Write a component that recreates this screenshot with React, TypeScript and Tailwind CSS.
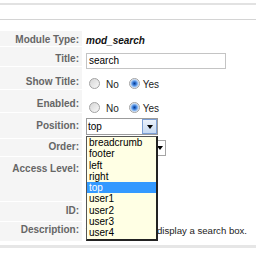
import React from 'react';

const positions = ['breadcrumb', 'footer', 'left', 'right', 'top', 'user1', 'user2', 'user3', 'user4'];

function Radio({ checked }: { checked?: boolean }) {
  return (
    <span
      className={`inline-block h-[11px] w-[11px] shrink-0 rounded-full border border-[#a2a2a2] ${
        checked
          ? 'bg-[radial-gradient(circle,#0b3a87_0,#2b6fd0_1.5px,#7fb0ee_3px,#e8eef6_4.5px,#f4f4f4_6px)]'
          : 'bg-[linear-gradient(135deg,#d6d6d6,#f8f8f8)]'
      }`}
    />
  );
}

function YesNo({ mt }: { mt: string }) {
  return (
    <div className={`flex items-center ${mt}`}>
      <div className="ml-[3px]">
        <Radio />
      </div>
      <span className="ml-[6px] text-[#222]">No</span>
      <div className="ml-[10px]">
        <Radio checked />
      </div>
      <span className="ml-[3px] text-[#222]">Yes</span>
    </div>
  );
}

function PositionSelect() {
  return (
    <div className="relative mt-[5px] h-[17px] w-[72px]">
      <div className="flex h-full w-full border border-[#9c9c9c] bg-white">
        <span className="flex-1 pl-[1px] leading-[15px] text-black">top</span>
        <span className="flex w-[15px] items-center justify-center border border-[#7c9fd4] bg-[linear-gradient(#eaf1fb,#c7daf2)]">
          <span className="h-0 w-0 border-x-[3.5px] border-t-[4px] border-x-transparent border-t-black" />
        </span>
      </div>
      <div className="absolute left-0 top-[18px] z-10 w-[72px] border border-[#555] border-b-2 border-r-2 border-b-[#222] border-r-[#222] bg-[#ffffe4]">
        {positions.map((p) => (
          <div
            key={p}
            className={`h-[11.3px] pl-[2px] leading-[11.3px] ${
              p === 'top' ? 'bg-[#3399ff] text-white' : 'text-black'
            }`}
          >
            {p}
          </div>
        ))}
      </div>
    </div>
  );
}

const rows = [
  { label: 'Module Type:', h: 'h-[15px]', pt: 'pt-[3px]' },
  { label: 'Title:', h: 'h-[19px]', pt: 'pt-[6px]' },
  { label: 'Show Title:', h: 'h-[22px]', pt: 'pt-[9px]' },
  { label: 'Enabled:', h: 'h-[22px]', pt: 'pt-[8px]' },
  { label: 'Position:', h: 'h-[25px]', pt: 'pt-[7px]' },
  { label: 'Order:', h: 'h-[17px]', pt: 'pt-[2px]' },
  { label: 'Access Level:', h: 'h-[44px]', pt: 'pt-[6px]' },
  { label: 'ID:', h: 'h-[19px]', pt: 'pt-[3px]' },
  { label: 'Description:', h: 'h-[19px]', pt: 'pt-[2px]' },
];

function Value({ label }: { label: string }) {
  switch (label) {
    case 'Module Type:':
      return <div className="pt-[4px] font-bold italic text-[#111]">mod_search</div>;
    case 'Title:':
      return (
        <div className="mt-[6px] h-[16px] w-[140px] border border-[#c4c4c4] pl-[2px] leading-[14px] text-black">
          search
        </div>
      );
    case 'Show Title:':
      return <YesNo mt="mt-[11px]" />;
    case 'Enabled:':
      return <YesNo mt="mt-[12px]" />;
    case 'Position:':
      return <PositionSelect />;
    case 'Order:':
      return (
        <div className="mt-[1px] flex h-[16px] w-[80px] items-center justify-end border border-[#a5a5a5] pr-[2px]">
          <span className="h-0 w-0 border-x-[3px] border-t-[4px] border-x-transparent border-t-black" />
        </div>
      );
    case 'Description:':
      return (
        <div className="whitespace-nowrap pt-[3px] text-[9.6px] text-[#222]">This Module will display a search box.</div>
      );
    default:
      return null;
  }
}

export default function App() {
  return (
    <div className="h-[256px] w-[256px] overflow-hidden bg-white font-['Liberation_Sans',Arial,sans-serif] text-[10px] leading-[12px]">
      <div className="h-[3px]" />
      <div className="h-[2px] bg-[#e2e2e2]" />
      <div className="h-[14px]" />
      <div className="h-px bg-[#d4d4d4]" />
      <div className="h-[11px]" />
      <div className="flex flex-col gap-px">
        {rows.map((r) => (
          <div key={r.label} className={`flex gap-[4px] ${r.h}`}>
            <div className={`w-[82px] shrink-0 bg-[#f5f5f5] pr-[3px] text-right font-bold text-[#666] ${r.pt}`}>
              {r.label}
            </div>
            <div className="relative flex-1">
              <Value label={r.label} />
            </div>
          </div>
        ))}
      </div>
      <div className="mt-[4px] h-[3px] bg-[#e6e6e6]" />
    </div>
  );
}
